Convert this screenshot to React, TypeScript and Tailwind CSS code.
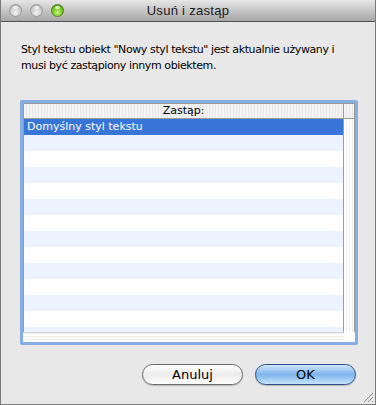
import React from "react";

const rows = Array.from({ length: 14 }, (_, i) => i);

function Light({ color }: { color: "gray" | "green" }) {
  const bg =
    color === "green"
      ? "bg-[radial-gradient(circle_at_50%_70%,#c8f58a_0%,#7fcf2a_45%,#3f8a10_100%)] border-[#4d7f1f]"
      : "bg-[radial-gradient(circle_at_50%_70%,#f2f2f2_0%,#cfcfcf_50%,#a6a6a6_100%)] border-[#9a9a9a]";
  return (
    <div className={`relative w-[13px] h-[13px] rounded-full border ${bg}`}>
      <div className="absolute left-[3px] top-[1px] w-[5px] h-[3px] rounded-full bg-white/70" />
    </div>
  );
}

export default function App() {
  return (
    <div
      className="w-[376px] h-[405px] flex flex-col bg-[#e8e8e8] border-x border-b border-[#7a7a7a] overflow-hidden"
      style={{ fontFamily: '"DejaVu Sans", "Liberation Sans", sans-serif' }}
    >
      {/* title bar */}
      <div className="relative h-[22px] shrink-0 flex items-center bg-gradient-to-b from-[#e6e6e6] to-[#a7a7a7] border-b border-[#515151]">
        <div className="flex items-center gap-[8px] pl-[8px]">
          <Light color="gray" />
          <Light color="gray" />
          <Light color="green" />
        </div>
        <div
          className="absolute inset-0 flex items-center justify-center text-[13px] tracking-[0.3px] text-[#1a1a1a]"
          style={{ fontFamily: '"Liberation Sans", sans-serif' }}
        >
          Usuń i zastąp
        </div>
      </div>

      {/* message */}
      <div className="pl-[20px] pt-[20px] text-[11px] leading-[16px] text-black tracking-[-0.4px]">
        <div>Styl tekstu obiekt "Nowy styl tekstu" jest aktualnie używany i</div>
        <div>musi być zastąpiony innym obiektem.</div>
      </div>

      {/* list */}
      <div className="ml-[19px] mt-[26px] w-[338px] h-[245px] rounded-[2px] border-[3px] border-[#86aee3] bg-white flex flex-col">
        <div className="flex-1 flex min-h-0 border border-[#9a9a9a] border-b-0">
          <div className="flex-1 flex flex-col min-w-0">
            <div className="h-[15px] shrink-0 flex items-center justify-center text-[11px] text-black bg-[repeating-linear-gradient(90deg,#f4f4f4_0px,#f4f4f4_2px,#e6e6e6_2px,#e6e6e6_3px)] border-b border-[#9c9c9c]">
              Zastąp:
            </div>
            <div className="flex-1 overflow-hidden">
              {rows.map((i) => (
                <div
                  key={i}
                  className={`h-[16px] flex items-center pl-[3px] text-[11px] ${
                    i === 0 ? "bg-[#3875d7] text-white" : i % 2 === 1 ? "bg-[#edf3fe]" : "bg-white"
                  }`}
                >
                  {i === 0 ? "Domyślny styl tekstu" : ""}
                </div>
              ))}
            </div>
          </div>
          <div className="w-[11px] shrink-0 flex flex-col border-l border-[#9c9c9c]">
            <div className="h-[15px] shrink-0 bg-[repeating-linear-gradient(90deg,#f4f4f4_0px,#f4f4f4_2px,#e6e6e6_2px,#e6e6e6_3px)] border-b border-[#9c9c9c]" />
            <div className="flex-1 bg-[repeating-linear-gradient(90deg,#ffffff_0px,#ffffff_2px,#eeeeee_2px,#eeeeee_3px)]" />
          </div>
        </div>
        <div className="h-[10px] shrink-0 flex">
          <div className="flex-1 bg-[repeating-linear-gradient(0deg,#ffffff_0px,#ffffff_2px,#eeeeee_2px,#eeeeee_3px)] border-t border-[#d4d4d4]" />
          <div className="w-[11px] bg-white" />
        </div>
      </div>

      {/* buttons */}
      <div className="flex justify-end gap-[12px] pr-[19px] mt-[19px]">
        <button className="w-[101px] h-[21px] rounded-full border border-[#6b6b6b] bg-gradient-to-b from-[#ffffff] via-[#ececec] to-[#ffffff] text-[13px] text-black flex items-center justify-center shadow-[0_1px_1px_rgba(0,0,0,0.2)]">
          Anuluj
        </button>
        <button className="w-[101px] h-[21px] rounded-full border border-[#2c4f8c] bg-gradient-to-b from-[#d2e6fb] via-[#7fb3ec] to-[#c6e4fb] text-[13px] text-black flex items-center justify-center shadow-[0_1px_1px_rgba(0,0,0,0.2)]">
          OK
        </button>
      </div>

      {/* resize grip */}
      <div className="flex-1 flex items-end justify-end">
        <svg width="12" height="12" viewBox="0 0 12 12" className="mb-[1px] mr-[1px]">
          <line x1="11" y1="2" x2="2" y2="11" stroke="#8a8a8a" strokeWidth="1" />
          <line x1="11" y1="6" x2="6" y2="11" stroke="#8a8a8a" strokeWidth="1" />
          <line x1="11" y1="10" x2="10" y2="11" stroke="#8a8a8a" strokeWidth="1" />
        </svg>
      </div>
    </div>
  );
}
